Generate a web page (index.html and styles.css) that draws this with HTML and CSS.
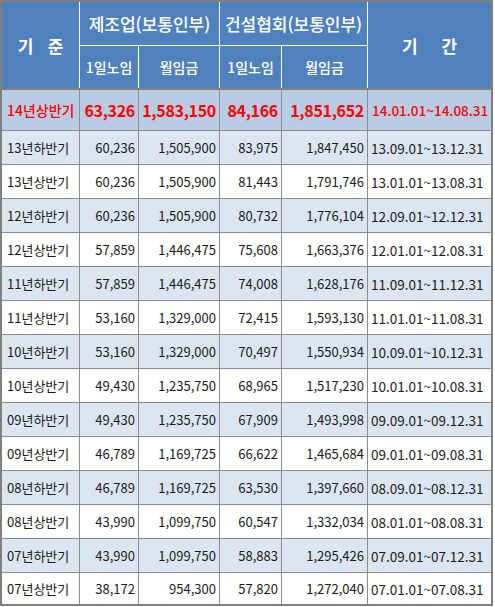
FILE: index.html
```html
<!DOCTYPE html>
<html lang="ko">
<head>
<meta charset="utf-8">
<title>노임 단가</title>
<link rel="stylesheet" href="styles.css">
</head>
<body>
<div class="sheet">
  <div class="head">
    <div class="h h-key">기&nbsp;&nbsp;&nbsp;준</div>
    <div class="h h-group g1">제조업(보통인부)</div>
    <div class="h h-group g2">건설협회(보통인부)</div>
    <div class="h h-period">기&nbsp;&nbsp;&nbsp;&nbsp;&nbsp;간</div>
    <div class="h h-sub">1일노임</div>
    <div class="h h-sub">월임금</div>
    <div class="h h-sub">1일노임</div>
    <div class="h h-sub">월임금</div>
  </div>
  <div class="body">
    <div class="c lbl hot">14년상반기</div><div class="c num hot">63,326</div><div class="c num hot">1,583,150</div><div class="c num hot">84,166</div><div class="c num hot">1,851,652</div><div class="c per hot hotper">14.01.01~14.08.31</div>

    <div class="c lbl alt">13년하반기</div><div class="c num alt">60,236</div><div class="c num alt">1,505,900</div><div class="c num alt">83,975</div><div class="c num alt">1,847,450</div><div class="c per alt">13.09.01~13.12.31</div>
    <div class="c lbl">13년상반기</div><div class="c num">60,236</div><div class="c num">1,505,900</div><div class="c num">81,443</div><div class="c num">1,791,746</div><div class="c per">13.01.01~13.08.31</div>
    <div class="c lbl alt">12년하반기</div><div class="c num alt">60,236</div><div class="c num alt">1,505,900</div><div class="c num alt">80,732</div><div class="c num alt">1,776,104</div><div class="c per alt">12.09.01~12.12.31</div>
    <div class="c lbl">12년상반기</div><div class="c num">57,859</div><div class="c num">1,446,475</div><div class="c num">75,608</div><div class="c num">1,663,376</div><div class="c per">12.01.01~12.08.31</div>
    <div class="c lbl alt">11년하반기</div><div class="c num alt">57,859</div><div class="c num alt">1,446,475</div><div class="c num alt">74,008</div><div class="c num alt">1,628,176</div><div class="c per alt">11.09.01~11.12.31</div>
    <div class="c lbl">11년상반기</div><div class="c num">53,160</div><div class="c num">1,329,000</div><div class="c num">72,415</div><div class="c num">1,593,130</div><div class="c per">11.01.01~11.08.31</div>
    <div class="c lbl alt">10년하반기</div><div class="c num alt">53,160</div><div class="c num alt">1,329,000</div><div class="c num alt">70,497</div><div class="c num alt">1,550,934</div><div class="c per alt">10.09.01~10.12.31</div>
    <div class="c lbl">10년상반기</div><div class="c num">49,430</div><div class="c num">1,235,750</div><div class="c num">68,965</div><div class="c num">1,517,230</div><div class="c per">10.01.01~10.08.31</div>
    <div class="c lbl alt">09년하반기</div><div class="c num alt">49,430</div><div class="c num alt">1,235,750</div><div class="c num alt">67,909</div><div class="c num alt">1,493,998</div><div class="c per alt">09.09.01~09.12.31</div>
    <div class="c lbl">09년상반기</div><div class="c num">46,789</div><div class="c num">1,169,725</div><div class="c num">66,622</div><div class="c num">1,465,684</div><div class="c per">09.01.01~09.08.31</div>
    <div class="c lbl alt">08년하반기</div><div class="c num alt">46,789</div><div class="c num alt">1,169,725</div><div class="c num alt">63,530</div><div class="c num alt">1,397,660</div><div class="c per alt">08.09.01~08.12.31</div>
    <div class="c lbl">08년상반기</div><div class="c num">43,990</div><div class="c num">1,099,750</div><div class="c num">60,547</div><div class="c num">1,332,034</div><div class="c per">08.01.01~08.08.31</div>
    <div class="c lbl alt">07년하반기</div><div class="c num alt">43,990</div><div class="c num alt">1,099,750</div><div class="c num alt">58,883</div><div class="c num alt">1,295,426</div><div class="c per alt">07.09.01~07.12.31</div>
    <div class="c lbl">07년상반기</div><div class="c num">38,172</div><div class="c num">954,300</div><div class="c num">57,820</div><div class="c num">1,272,040</div><div class="c per">07.01.01~07.08.31</div>
  </div>
</div>
</body>
</html>
```

FILE: styles.css
```css
html, body {
  margin: 0;
  padding: 0;
  background: #ffffff;
}

.sheet {
  width: 493px;
  box-sizing: border-box;
  border: 2px solid #808080;
  font-family: "Noto Sans CJK KR", "Noto Sans", sans-serif;
}

.head {
  display: grid;
  grid-template-columns: 77px 58px 80px 61px 85px 123px;
  grid-template-rows: 43px 42px;
  gap: 1px;
  background: #ffffff;
  border-bottom: 2px solid #808080;
}

.h {
  background: #4f81bd;
  color: #ffffff;
  display: flex;
  align-items: center;
  justify-content: center;
  white-space: nowrap;
}

.h-key {
  grid-row: 1 / span 2;
  grid-column: 1;
  font-size: 17px;
  font-weight: 700;
}

.h-group {
  grid-row: 1;
  font-size: 17px;
  font-weight: 500;
}

.g1 { grid-column: 2 / span 2; }
.g2 { grid-column: 4 / span 2; }

.h-period {
  grid-row: 1 / span 2;
  grid-column: 6;
  font-size: 17px;
  font-weight: 700;
}

.h-sub {
  grid-row: 2;
  font-size: 14px;
  font-weight: 500;
}

.body {
  display: grid;
  grid-template-columns: 77px 58px 80px 61px 85px 123px;
  grid-template-rows: 40px repeat(13, 33px) 31px;
  gap: 1px;
  background: #8c8c8c;
}

.c {
  background: #ffffff;
  color: #1a1a1a;
  font-size: 13px;
  display: flex;
  align-items: center;
  white-space: nowrap;
}

.c.alt {
  background: #dce6f1;
}

.lbl {
  padding-left: 5px;
}

.num {
  justify-content: flex-end;
  padding-right: 3px;
}

.per {
  padding-left: 3px;
  font-size: 13.5px;
}

.c.hot {
  background: #b8cce4;
  color: #ff0000;
  font-weight: 700;
  font-size: 16px;
  letter-spacing: -0.3px;
}

.c.lbl.hot {
  font-size: 14px;
  font-weight: 500;
  letter-spacing: 0;
}

.c.hotper {
  font-size: 13.5px;
  font-weight: 500;
  padding-left: 4px;
  letter-spacing: 0;
}
```
